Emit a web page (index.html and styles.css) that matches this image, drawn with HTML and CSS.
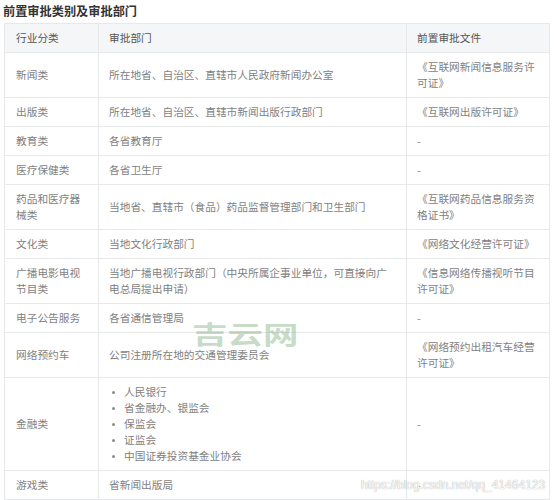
FILE: index.html
```html
<!DOCTYPE html>
<html lang="zh">
<head>
<meta charset="utf-8">
<link rel="stylesheet" href="styles.css">
</head>
<body>
<div class="page">
  <h3 class="title">前置审批类别及审批部门</h3>
  <table class="grid">
    <colgroup>
      <col class="c1"><col class="c2"><col class="c3">
    </colgroup>
    <thead>
      <tr><th>行业分类</th><th>审批部门</th><th>前置审批文件</th></tr>
    </thead>
    <tbody>
      <tr><td>新闻类</td><td>所在地省、自治区、直辖市人民政府新闻办公室</td><td>《互联网新闻信息服务许可证》</td></tr>
      <tr><td>出版类</td><td>所在地省、自治区、直辖市新闻出版行政部门</td><td>《互联网出版许可证》</td></tr>
      <tr><td>教育类</td><td>各省教育厅</td><td>-</td></tr>
      <tr><td>医疗保健类</td><td>各省卫生厅</td><td>-</td></tr>
      <tr><td>药品和医疗器械类</td><td>当地省、直辖市（食品）药品监督管理部门和卫生部门</td><td>《互联网药品信息服务资格证书》</td></tr>
      <tr><td>文化类</td><td>当地文化行政部门</td><td>《网络文化经营许可证》</td></tr>
      <tr><td>广播电影电视节目类</td><td>当地广播电视行政部门（中央所属企事业单位，可直接向广电总局提出申请）</td><td>《信息网络传播视听节目许可证》</td></tr>
      <tr><td>电子公告服务</td><td>各省通信管理局</td><td>-</td></tr>
      <tr><td>网络预约车</td><td>公司注册所在地的交通管理委员会</td><td>《网络预约出租汽车经营许可证》</td></tr>
      <tr><td>金融类</td><td><ul class="list"><li>人民银行</li><li>省金融办、银监会</li><li>保监会</li><li>证监会</li><li>中国证券投资基金业协会</li></ul></td><td>-</td></tr>
      <tr><td>游戏类</td><td>省新闻出版局</td><td>-</td></tr>
    </tbody>
  </table>
  <div class="mark">吉云网</div>
  <div class="url">https://blog.csdn.net/qq_41464123</div>
</div>
</body>
</html>
```

FILE: styles.css
```css
html, body {
  margin: 0;
  padding: 0;
  background: #ffffff;
}
.page {
  position: relative;
  padding: 0 5px 0 4px;
  font-family: "Noto Sans CJK SC", "Microsoft YaHei", sans-serif;
}
.title {
  margin: 0 0 0 -1px;
  height: 23px;
  font-size: 12.2px;
  line-height: 23px;
  font-weight: bold;
  color: #333333;
}
.grid {
  width: 545px;
  border-collapse: collapse;
  table-layout: fixed;
  font-size: 10.7px;
  line-height: 16px;
  color: #7f7f7f;
}
.c1 { width: 94px; }
.c2 { width: 308px; }
.c3 { width: 143px; }
.grid th,
.grid td {
  border: 1px solid #e6e8ea;
  padding: 6px 10px 6px 10px;
  text-align: left;
  vertical-align: middle;
  word-break: break-all;
}
.grid th {
  background: #f5f6f7;
  font-weight: normal;
  color: #555555;
}
.grid td:first-child,
.grid th:first-child {
  padding-left: 11px;
}
.list {
  margin: 0;
  padding: 0 0 0 15px;
  list-style: none;
}
.list li {
  position: relative;
  padding-left: 0;
}
.list li::before {
  content: "";
  position: absolute;
  left: -12px;
  top: 7px;
  width: 3px;
  height: 3px;
  border-radius: 50%;
  background: #8a8a8a;
}
.mark {
  position: absolute;
  left: 192px;
  top: 321px;
  font-size: 25px;
  line-height: 25px;
  font-weight: bold;
  color: rgba(125, 175, 125, 0.45);
  transform: scaleX(1.42);
  transform-origin: 0 0;
  white-space: nowrap;
}
.url {
  position: absolute;
  left: 361px;
  top: 477px;
  font-family: "Liberation Sans", Arial, sans-serif;
  font-size: 12px;
  line-height: 16px;
  color: rgba(255, 255, 255, 0.9);
  text-shadow: 0 0 1px #b5b5b5, 0 0 1px #c8c8c8;
}
```
